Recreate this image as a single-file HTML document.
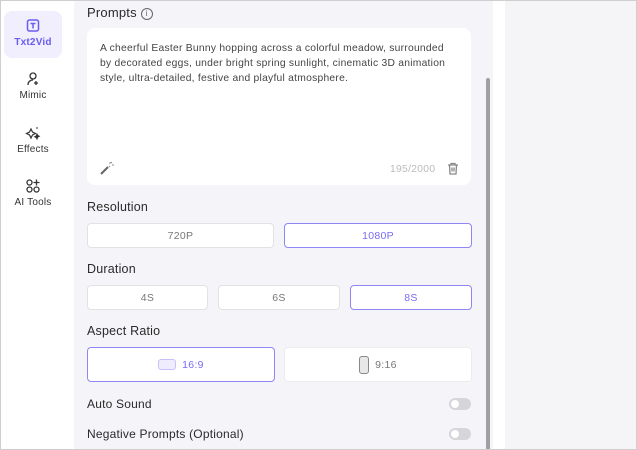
<!DOCTYPE html>
<html><head><style>
*{box-sizing:border-box;margin:0;padding:0}
body{width:637px;height:450px;overflow:hidden;font-family:"Liberation Sans",sans-serif;background:#fff;position:relative;color:#222}
.abs{position:absolute}
.frame{position:absolute;left:0;top:0;width:637px;height:450px;border:1px solid #cfcfcf;pointer-events:none}
.side{left:1px;top:1px;width:72px;height:448px;background:#fff}
.nav{position:absolute;left:3px;width:58px;text-align:center;font-size:10px;color:#333;letter-spacing:0.2px}
.main{left:74px;top:1px;width:419px;height:449px;background:#f5f5f9}
.right{left:505px;top:1px;width:131px;height:449px;background:#f5f5f8}
.lbl{position:absolute;left:87px;font-size:12.5px;color:#2a2a2a;letter-spacing:0.2px}
.btn{position:absolute;background:#fff;border:1px solid #e2e2e6;border-radius:4px;font-size:10.5px;color:#777;display:flex;align-items:center;justify-content:center;letter-spacing:0.3px}
.sel{border-color:#8f86f5;color:#7a6cf2}
.tog{position:absolute;left:449px;width:22px;height:12px;border-radius:6px;background:#d6d6da}
.tog:after{content:"";position:absolute;left:2px;top:2px;width:8px;height:8px;border-radius:50%;background:#fff}
</style></head><body>
<div class="abs side">
 <div class="nav" style="top:10px;height:47px;background:#f1eefe;border-radius:8px;color:#6a5cf0;font-weight:bold">
  <svg width="16" height="16" viewBox="0 0 16 16" style="margin-top:7px"><rect x="2.5" y="2" width="11" height="11" rx="2" fill="none" stroke="#6a5cf0" stroke-width="1.5"/><path d="M5.5 5.5h5M8 5.5v5" stroke="#6a5cf0" stroke-width="1.5"/></svg>
  <div>Txt2Vid</div></div>
 <div class="nav" style="top:70px"><svg width="16" height="16" viewBox="0 0 16 16"><circle cx="8" cy="5" r="3" fill="none" stroke="#333" stroke-width="1.3"/><path d="M3 14c0-3 2-5 5-5M11 10v4M9 12h4" fill="none" stroke="#333" stroke-width="1.3"/></svg><div>Mimic</div></div>
 <div class="nav" style="top:124px"><svg width="16" height="16" viewBox="0 0 16 16"><path d="M6 4l1.5 3 3 1.5-3 1.5L6 13l-1.5-3L1.5 8.5l3-1.5z" fill="none" stroke="#333" stroke-width="1.2"/><path d="M12 9l.8 1.5 1.5.8-1.5.8L12 14l-.8-1.5-1.5-.8 1.5-.8zM12 2v2" stroke="#333" fill="#333"/></svg><div>Effects</div></div>
 <div class="nav" style="top:177px"><svg width="16" height="16" viewBox="0 0 16 16" fill="none" stroke="#333" stroke-width="1.3"><circle cx="4.5" cy="4.5" r="2.5"/><circle cx="4.5" cy="11.5" r="2.5"/><circle cx="11.5" cy="11.5" r="2.5"/><path d="M11.5 1.5v6M8.5 4.5h6"/></svg><div>AI Tools</div></div>
</div>
<div class="abs main"></div>
<div class="abs" style="left:493px;top:1px;width:12px;height:449px;background:#fff"></div>
<div class="abs right"></div>
<div class="abs" style="left:486px;top:78px;width:4px;height:372px;background:#a0a0a0;border-radius:2px"></div>
<div class="lbl" style="top:5px;font-size:13px">Prompts <span style="display:inline-block;width:12px;height:12px;border:1px solid #666;border-radius:50%;font-size:8px;text-align:center;line-height:10px;color:#666;vertical-align:1px">i</span></div>
<div class="abs" style="left:87px;top:28px;width:384px;height:157px;background:#fff;border-radius:8px"></div>
<div class="abs" style="left:100px;top:41px;width:350px;font-size:10.3px;line-height:15px;color:#444;letter-spacing:0.25px">A cheerful Easter Bunny hopping across a colorful meadow, surrounded by decorated eggs, under bright spring sunlight, cinematic 3D animation style, ultra-detailed, festive and playful atmosphere.</div>
<svg class="abs" style="left:100px;top:161px" width="14" height="14" viewBox="0 0 14 14"><path d="M1 13l7-7" stroke="#666" stroke-width="2"/><path d="M10 1v2M12 4h2M9 5l1 1M12 1l-1 1" stroke="#888"/></svg>
<div class="abs" style="left:390px;top:164px;font-size:10.3px;color:#bbb;letter-spacing:0.3px">195/2000</div>
<svg class="abs" style="left:447px;top:162px" width="12" height="13" viewBox="0 0 12 13" fill="none" stroke="#888" stroke-width="1.3"><path d="M1 3h10M4 3V1.5h4V3M2.5 3l.5 9h6l.5-9M5 5.5v4M7 5.5v4"/></svg>
<div class="lbl" style="top:200px">Resolution</div>
<div class="btn" style="left:87px;top:223px;width:187px;height:25px">720P</div>
<div class="btn sel" style="left:284px;top:223px;width:188px;height:25px">1080P</div>
<div class="lbl" style="top:262px">Duration</div>
<div class="btn" style="left:87px;top:285px;width:121px;height:25px">4S</div>
<div class="btn" style="left:218px;top:285px;width:122px;height:25px">6S</div>
<div class="btn sel" style="left:350px;top:285px;width:122px;height:25px">8S</div>
<div class="lbl" style="top:324px">Aspect Ratio</div>
<div class="btn sel" style="left:87px;top:347px;width:188px;height:35px"><span style="display:inline-block;width:18px;height:11px;border:1px solid #c8c0f8;background:#efedfd;border-radius:3px;margin-right:6px"></span>16:9</div>
<div class="btn" style="left:284px;top:347px;width:188px;height:35px;border-color:#ececef"><span style="display:inline-block;width:10px;height:18px;border:1px solid #888;background:#e8e8e8;border-radius:3px;margin-right:6px"></span>9:16</div>
<div class="lbl" style="top:397px;font-size:12px">Auto Sound</div>
<div class="tog" style="top:398px"></div>
<div class="lbl" style="top:427px;font-size:12px">Negative Prompts (Optional)</div>
<div class="tog" style="top:428px"></div>
<div class="frame"></div>
</body></html>
